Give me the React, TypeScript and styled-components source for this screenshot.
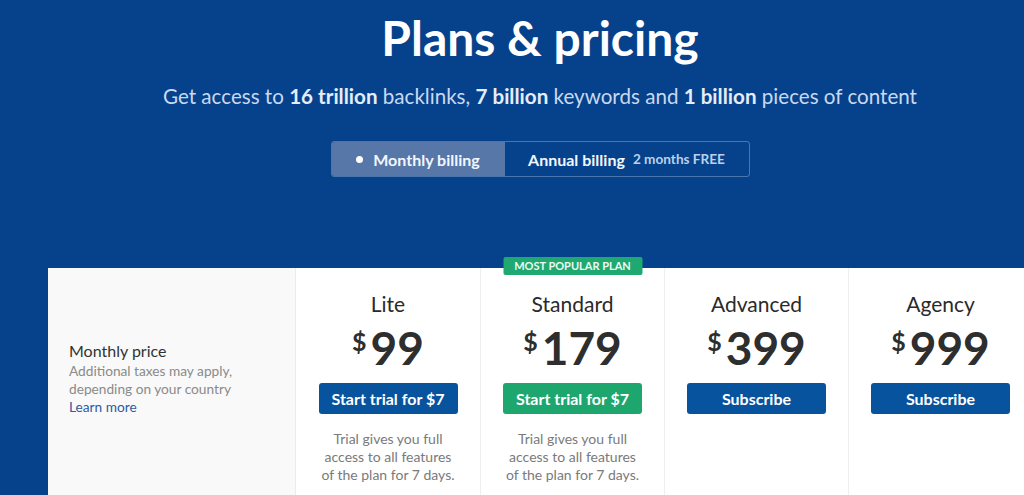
import styled, { createGlobalStyle } from 'styled-components'

const GlobalStyle = createGlobalStyle`
  html, body {
    margin: 0;
    padding: 0;
    background: #06428b;
    overflow: hidden;
  }
  * {
    box-sizing: border-box;
  }
  body {
    font-family: Lato, 'Open Sans', Arial, sans-serif;
  }
`

const Page = styled.div`
  width: 1080px;
  min-height: 495px;
  background: #06428b;
  padding: 8px 48px 0;
`

const Hero = styled.header`
  display: flex;
  flex-direction: column;
  align-items: center;
`

const Title = styled.h1`
  margin: 0;
  font-size: 48px;
  line-height: 60px;
  font-weight: 700;
  color: #ffffff;
`

const Subtitle = styled.p`
  margin: 15px 0 0;
  font-size: 20.6px;
  line-height: 26px;
  color: #c9d9f1;
  b {
    font-weight: 700;
    color: #e4edfa;
  }
`

const Toggle = styled.div`
  margin-top: 32px;
  display: flex;
  width: 419px;
  height: 36px;
  border: 1px solid rgba(255, 255, 255, 0.28);
  border-radius: 3px;
  overflow: hidden;
`

const ToggleOption = styled.button<{ $active?: boolean; $width: number }>`
  width: ${({ $width }) => $width}px;
  display: flex;
  align-items: center;
  justify-content: center;
  gap: 8px;
  border: none;
  padding: 0;
  font-family: inherit;
  font-size: 16px;
  font-weight: 700;
  color: #f2f6fc;
  background: ${({ $active }) => ($active ? '#5677a8' : 'transparent')};
  cursor: pointer;
`

const Dot = styled.span`
  width: 7px;
  height: 7px;
  border-radius: 50%;
  background: #ffffff;
  margin-right: 2px;
`

const Free = styled.span`
  font-size: 13.6px;
  font-weight: 700;
  color: #bcd0ec;
`

const Card = styled.section`
  margin-top: 91px;
  display: grid;
  grid-template-columns: 248px repeat(4, 184px);
  background: #ffffff;
  border-radius: 3px 3px 0 0;
  min-height: 240px;
`

const LabelCell = styled.div`
  background: #f9f9f9;
  border-right: 1px solid #ececec;
  padding: 72px 20px 0 21px;
`

const LabelTitle = styled.div`
  font-size: 16px;
  line-height: 22px;
  color: #333333;
`

const LabelNote = styled.div`
  font-size: 13.7px;
  line-height: 18px;
  color: #8a8a8a;
`

const LearnMore = styled.a`
  display: block;
  font-size: 13.7px;
  line-height: 18px;
  color: #2c5aa6;
  text-decoration: none;
`

const PlanCell = styled.div`
  position: relative;
  display: flex;
  flex-direction: column;
  align-items: center;
  padding-top: 22px;
  border-left: 1px solid #efefef;
  &:nth-child(2) {
    border-left: none;
  }
`

const Badge = styled.div`
  position: absolute;
  top: -11px;
  left: 50%;
  transform: translateX(-50%);
  width: 139px;
  height: 18px;
  border-radius: 2px;
  background: #1fa870;
  color: #ecfaf3;
  font-size: 11px;
  font-weight: 700;
  line-height: 18px;
  text-align: center;
  white-space: nowrap;
`

const PlanName = styled.div`
  font-size: 21px;
  line-height: 28px;
  color: #2a2a2a;
`

const Price = styled.div`
  margin-top: 6px;
  display: flex;
  align-items: flex-start;
  height: 48px;
  color: #2e2e2e;
`

const Currency = styled.span`
  font-size: 25px;
  font-weight: 700;
  line-height: 30px;
  margin-top: 2px;
  margin-right: 4px;
`

const Amount = styled.span`
  font-size: 46px;
  font-weight: 700;
  line-height: 48px;
`

const PlanButton = styled.button<{ $green?: boolean }>`
  margin-top: 11px;
  width: 139px;
  height: 31px;
  border: none;
  border-radius: 3px;
  background: ${({ $green }) => ($green ? '#1ea66f' : '#07539d')};
  color: #ffffff;
  font-family: inherit;
  font-size: 16px;
  font-weight: 700;
  cursor: pointer;
`

const Note = styled.p`
  margin: 16px 0 0;
  font-size: 14px;
  line-height: 18px;
  color: #7a7a7a;
  text-align: center;
  width: 136px;
`

const plans = [
  { name: 'Lite', price: '99', action: 'Start trial for $7', trial: true },
  { name: 'Standard', price: '179', action: 'Start trial for $7', trial: true, popular: true },
  { name: 'Advanced', price: '399', action: 'Subscribe' },
  { name: 'Agency', price: '999', action: 'Subscribe' },
]

export default function App() {
  return (
    <Page>
      <GlobalStyle />
      <Hero>
        <Title>Plans &amp; pricing</Title>
        <Subtitle>
          Get access to <b>16 trillion</b> backlinks, <b>7 billion</b> keywords and <b>1 billion</b> pieces of
          content
        </Subtitle>
        <Toggle>
          <ToggleOption $active $width={173}>
            <Dot />
            Monthly billing
          </ToggleOption>
          <ToggleOption $width={244}>
            Annual billing
            <Free>2 months FREE</Free>
          </ToggleOption>
        </Toggle>
      </Hero>
      <Card>
        <LabelCell>
          <LabelTitle>Monthly price</LabelTitle>
          <LabelNote>
            Additional taxes may apply,
            <br />
            depending on your country
          </LabelNote>
          <LearnMore href="#">Learn more</LearnMore>
        </LabelCell>
        {plans.map(plan => (
          <PlanCell key={plan.name}>
            {plan.popular && <Badge>MOST POPULAR PLAN</Badge>}
            <PlanName>{plan.name}</PlanName>
            <Price>
              <Currency>$</Currency>
              <Amount>{plan.price}</Amount>
            </Price>
            <PlanButton $green={plan.popular}>{plan.action}</PlanButton>
            {plan.trial && <Note>Trial gives you full access to all features of the plan for 7 days.</Note>}
          </PlanCell>
        ))}
      </Card>
    </Page>
  )
}
